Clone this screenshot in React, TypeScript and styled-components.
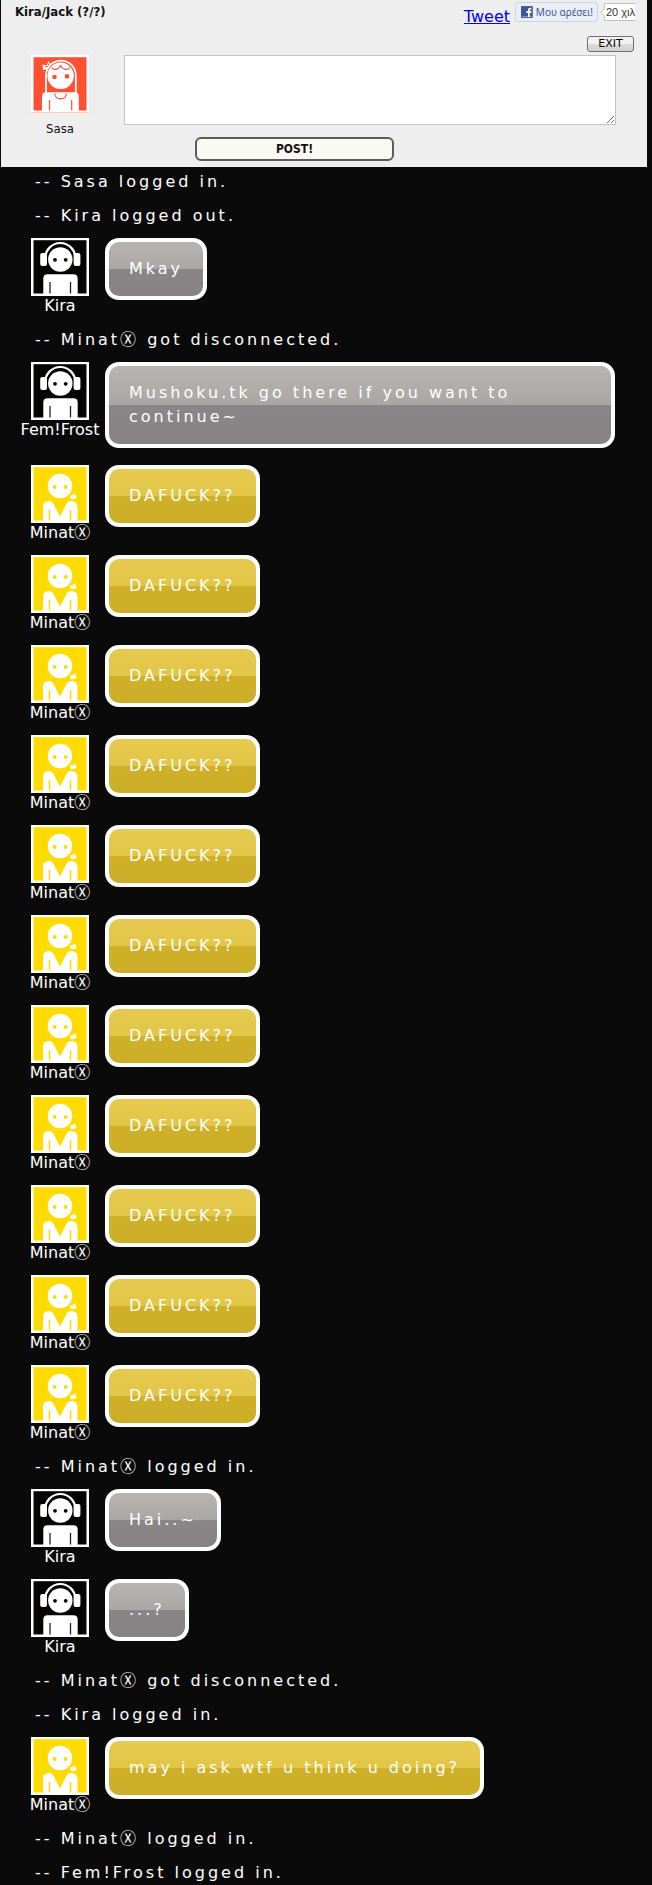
import React from 'react';
import styled, { createGlobalStyle } from 'styled-components';

const GlobalStyle = createGlobalStyle`
  *, *::before, *::after { box-sizing: border-box; }
  body {
    margin: 0;
    background: #0a0a0a;
    font-family: 'DejaVu Sans', 'Noto Sans CJK JP', sans-serif;
    font-size: 16px;
    line-height: 20px;
    color: #fff;
  }
`;

const narrow = `'DejaVu Sans Condensed', 'DejaVu Sans', sans-serif`;

type Kind = 'kira' | 'minat' | 'sasa';

const Header = styled.header`
  margin: 0 5px 0 1px;
  padding: 0 12px 6px 14px;
  background: #eee;
  color: #111;
  font-family: ${narrow};
  font-stretch: condensed;
`;

const TopBar = styled.div`
  display: flex;
  justify-content: space-between;
  align-items: flex-start;
  height: 36px;
  padding-top: 2px;
`;

const RoomTitle = styled.h1`
  margin: 0;
  font-size: 13px;
  line-height: 20px;
  font-weight: bold;
`;

const Social = styled.div`
  display: flex;
  align-items: flex-start;
`;

const TweetLink = styled.a`
  margin: 5px 5px 0 0;
  color: #00e;
  font-family: 'DejaVu Sans', sans-serif;
  font-stretch: normal;
`;

const LikeButton = styled.button`
  display: flex;
  align-items: center;
  gap: 3px;
  width: 83px;
  height: 20px;
  padding: 0 4px 0 5px;
  border: 1px solid #cad4e7;
  border-radius: 3px;
  background: #eceef5;
  color: #3b5998;
  font-family: 'Noto Sans', sans-serif;
  font-size: 10px;
  white-space: nowrap;
`;

const CountWrap = styled.div`
  display: flex;
  align-items: center;
  width: 37px;
  height: 20px;
  padding-left: 2px;
`;

const CountArrow = styled.svg`
  flex: none;
  z-index: 1;
  margin-right: -1px;
`;

const Count = styled.span`
  flex: 1;
  height: 18px;
  padding-left: 1px;
  border: 1px solid #c1c1c1;
  border-right: 0;
  background: #fff;
  color: #333;
  font-family: 'Liberation Sans', sans-serif;
  font-size: 11px;
  line-height: 16px;
  white-space: nowrap;
`;

const ExitRow = styled.div`
  display: flex;
  justify-content: flex-end;
  margin-bottom: 3px;
  padding-right: 1px;
`;

const ExitButton = styled.button`
  width: 47px;
  height: 16px;
  padding: 0;
  border: 1px solid #707070;
  border-radius: 3px;
  background: linear-gradient(#f2f2f2 50%, #dddddd 50%, #cfcfcf);
  color: #000;
  font-family: 'DejaVu Sans', sans-serif;
  font-size: 11px;
  line-height: 14px;
`;

const Composer = styled.form`
  display: flex;
  gap: 19px;
  padding-right: 19px;
`;

const Person = styled.div`
  display: flex;
  flex: none;
  flex-direction: column;
  align-items: center;
  width: 90px;
`;

const Picture = styled.svg`
  display: block;
  width: 58px;
  height: 58px;
`;

const OwnName = styled.label`
  margin-top: 6px;
  font-size: 13px;
`;

const Fields = styled.div`
  display: flex;
  flex: 1;
  flex-direction: column;
  align-items: flex-start;
  gap: 12px;
`;

const MessageBox = styled.textarea`
  display: block;
  width: 100%;
  height: 70px;
  border: 1px solid #c3c3c3;
  background: #fff;
  outline: none;
  font: inherit;
`;

const PostButton = styled.button`
  width: 199px;
  height: 24px;
  margin-left: 71px;
  padding: 0;
  border: 2px solid #5c5c5c;
  border-radius: 6px;
  background: #f9faf3;
  color: #111;
  font-family: inherit;
  font-stretch: inherit;
  font-size: 12px;
  font-weight: bold;
`;

const Log = styled.ul`
  margin: 0;
  padding: 0;
  list-style: none;
`;

const Notice = styled.li`
  padding: 5px 35px 9px;
  letter-spacing: 3px;

  &:last-child { padding-bottom: 2px; }
`;

const Talk = styled.li`
  display: flex;
  align-items: flex-start;
  min-height: 90px;
  padding: 3px 37px 14px 15px;
`;

const Name = styled.span`
  height: 15px;
  line-height: 20px;
  white-space: nowrap;
`;

const Bubble = styled.p<{ $kind: Kind }>`
  margin: 0;
  padding: 15px 20px;
  border: 4px solid #fff;
  border-radius: 14px;
  background: ${({ $kind }) =>
    $kind === 'minat'
      ? 'linear-gradient(#e6c94f, #e2c646 50%, #d0b029 50%, #ccae28)'
      : 'linear-gradient(#b8b4b2, #aaa6a4 50%, #8a8687 50%, #888284)'};
  background-origin: padding-box;
  line-height: 24px;
  letter-spacing: 3px;
`;

function Avatar({ kind }: { kind: Kind }) {
  if (kind === 'kira') {
    return (
      <Picture viewBox="0 0 58 58" aria-hidden="true">
        <rect width="58" height="58" fill="#fff" />
        <rect x="2.5" y="2.2" width="53" height="53.3" fill="#060303" />
        <path d="M14.3 20a15 15 0 0 1 30 0" fill="none" stroke="#fff" strokeWidth="2.2" />
        <rect x="9.2" y="15" width="6.8" height="13" rx="2" fill="#fff" />
        <rect x="42.6" y="15" width="6.8" height="13" rx="2" fill="#fff" />
        <circle cx="29.3" cy="21.5" r="12.2" fill="#fff" />
        <circle cx="24" cy="21.8" r="1.9" fill="#060303" />
        <circle cx="34.7" cy="21.8" r="1.9" fill="#060303" />
        <path d="M12.3 56V40.5q0-4.3 4.3-4.3h25.8q4.3 0 4.3 4.3V56z" fill="#fff" />
        <path d="M19 44v11.5M39.5 44v11.5" stroke="#222" strokeWidth="1.3" />
      </Picture>
    );
  }
  if (kind === 'minat') {
    return (
      <Picture viewBox="0 0 58 58" aria-hidden="true">
        <rect width="58" height="58" fill="#fff" />
        <rect x="2.5" y="2.2" width="53" height="53.3" fill="#ffdb00" />
        <circle cx="29" cy="21" r="12.2" fill="#fff" />
        <circle cx="23.7" cy="22" r="1.9" fill="#ffdb00" />
        <circle cx="34.7" cy="22" r="1.9" fill="#ffdb00" />
        <path d="M38.7 30.5l3-.3 2-2 2 5-5.5 1.2z" fill="#fff" />
        <path d="M12 56V42q0-6 6-6 3 0 4.500 3L29 51.500 35.500 39q1.500-3 4.500-3 6.500 0 6.500 6v14z" fill="#fff" />
        <path d="M18.500 45v10.500M39.500 45v10.500" stroke="#ffdb00" strokeWidth="1.500" />
      </Picture>
    );
  }
  return (
    <Picture viewBox="0 0 58 58" aria-hidden="true">
      <rect width="58" height="58" fill="#fff" />
      <rect x="2.5" y="2.2" width="53" height="53.3" fill="#ff5033" />
      <path d="M15 38V20.5a14.9 14.9 0 0 1 29.8 0V38" fill="none" stroke="#fff" strokeWidth="1.8" />
      <circle cx="29.6" cy="20.8" r="13.2" fill="#fff" />
      <path d="M20.5 12.5q2 2.5 5 1.8 3-.8 4-3.500 1.500 2.700 4.500 3.500 3 .7 5-1.800" fill="none" stroke="#ff5033" strokeWidth="1.2" />
      <path d="M11.5 9.5l4.5 1 1.500-4.800 2.200 4.800-2.200 3-5.500 1.800z" fill="#fff" />
      <path d="M14 11.8l3-.3M17.500 8.500v2" stroke="#ff5033" strokeWidth="1" />
      <circle cx="23.5" cy="22" r="2.3" fill="#ff5033" />
      <circle cx="36" cy="21.4" r="2.3" fill="#ff5033" />
      <path d="M11 57V41.500q0-4.200 4.200-4.200h28.300q4.300 0 4.300 4.200V57z" fill="#fff" />
      <path d="M23.800 38.500c0 7.200 11.500 7.200 11.500 0M18.500 45v10.500M40.700 45v10.500" fill="none" stroke="#ff5033" strokeWidth="1.2" />
      <path d="M0 57.500h58" stroke="#ffc9c1" />
    </Picture>
  );
}

type Entry = { notice: string } | { kind: Kind; name: string; text: string };

const shout: Entry = { kind: 'minat', name: 'MinatⓍ', text: 'DAFUCK??' };

const entries: Entry[] = [
  { notice: 'Sasa logged in.' },
  { notice: 'Kira logged out.' },
  { kind: 'kira', name: 'Kira', text: 'Mkay' },
  { notice: 'MinatⓍ got disconnected.' },
  { kind: 'kira', name: 'Fem!Frost', text: 'Mushoku.tk go there if you want to continue~' },
  ...Array.from({ length: 11 }, () => shout),
  { notice: 'MinatⓍ logged in.' },
  { kind: 'kira', name: 'Kira', text: 'Hai..~' },
  { kind: 'kira', name: 'Kira', text: '...?' },
  { notice: 'MinatⓍ got disconnected.' },
  { notice: 'Kira logged in.' },
  { kind: 'minat', name: 'MinatⓍ', text: 'may i ask wtf u think u doing?' },
  { notice: 'MinatⓍ logged in.' },
  { notice: 'Fem!Frost logged in.' },
];

export default function App() {
  return (
    <>
      <GlobalStyle />
      <Header>
        <TopBar>
          <RoomTitle>Kira/Jack (?/?)</RoomTitle>
          <Social>
            <TweetLink href="#tweet">Tweet</TweetLink>
            <LikeButton type="button">
              <svg width="12" height="12" viewBox="0 0 12 12" aria-hidden="true">
                <rect width="12" height="12" fill="#3b5998" />
                <path d="M1 10.500h10" stroke="#8b9dc3" />
                <path d="M10.500 2.500H9.500Q8 2.500 8 4v7M5.500 6H10.500" fill="none" stroke="#fff" strokeWidth="1.800" />
              </svg>
              Μου αρέσει!
            </LikeButton>
            <CountWrap>
              <CountArrow width="5" height="9" viewBox="0 0 5 9" aria-hidden="true">
                <path d="M5 0L.7 4.500 5 9" fill="#fff" stroke="#c1c1c1" />
              </CountArrow>
              <Count>20 χιλ</Count>
            </CountWrap>
          </Social>
        </TopBar>
        <ExitRow>
          <ExitButton type="button">EXIT</ExitButton>
        </ExitRow>
        <Composer onSubmit={(e) => e.preventDefault()}>
          <Person>
            <Avatar kind="sasa" />
            <OwnName htmlFor="message">Sasa</OwnName>
          </Person>
          <Fields>
            <MessageBox id="message" />
            <PostButton type="submit">POST!</PostButton>
          </Fields>
        </Composer>
      </Header>
      <Log>
        {entries.map((entry, i) =>
          'notice' in entry ? (
            <Notice key={i}>-- {entry.notice}</Notice>
          ) : (
            <Talk key={i}>
              <Person>
                <Avatar kind={entry.kind} />
                <Name>{entry.name}</Name>
              </Person>
              <Bubble $kind={entry.kind}>{entry.text}</Bubble>
            </Talk>
          ),
        )}
      </Log>
    </>
  );
}
